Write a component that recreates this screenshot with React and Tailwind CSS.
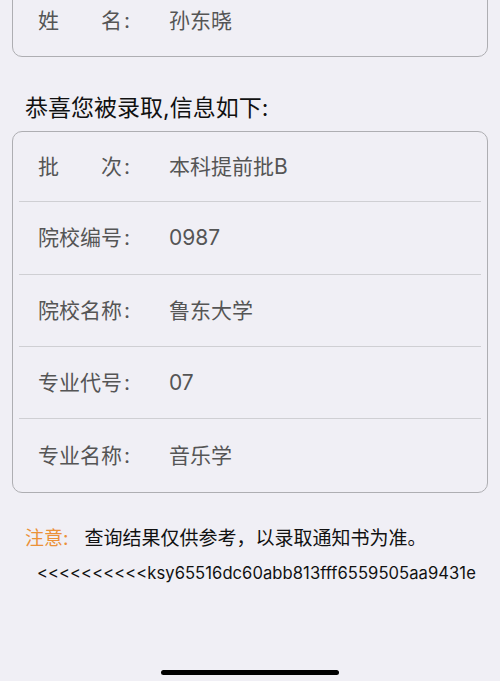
import React from "react";

const rows = [
  { label: ["批", "次"], value: "本科提前批B", h: "h-[70px]" },
  { label: ["院校编号"], value: "0987", h: "h-[73px]" },
  { label: ["院校名称"], value: "鲁东大学", h: "h-[72px]" },
  { label: ["专业代号"], value: "07", h: "h-[72px]" },
  { label: ["专业名称"], value: "音乐学", h: "h-[73px]" },
];

const font = {
  fontFamily: '"Inter", "Noto Sans CJK SC", sans-serif',
};

function Label({ parts }) {
  return (
    <div className="flex w-[131px] text-[21px] text-[#555]">
      <span className="flex w-[84px] justify-between">
        {parts.map((t) => (
          <span key={t}>{t}</span>
        ))}
      </span>
      <span className="ml-[2px]">:</span>
    </div>
  );
}

function Row({ label, value, h, last }) {
  return (
    <div className={`mx-[6px] flex items-center ${h} ${last ? "" : "border-b border-[#cfcfd3]"}`}>
      <div className="ml-[19px]">
        <Label parts={label} />
      </div>
      <div className="text-[21px] text-[#555]">{value}</div>
    </div>
  );
}

export default function App() {
  return (
    <div className="relative h-[681px] w-[500px] overflow-hidden bg-[#f0eff5]" style={font}>
      {/* top card, cut off by scroll */}
      <div className="mx-[12px] -mt-[20px] flex h-[77px] items-end rounded-[10px] border border-[#aeaeb2] pb-[20px]">
        <div className="ml-[25px]">
          <Label parts={["姓", "名"]} />
        </div>
        <div className="text-[21px] text-[#555]">孙东晓</div>
      </div>

      <h2 className="ml-[25px] mt-[36px] text-[23px] leading-[30px] text-[#111]">恭喜您被录取,信息如下:</h2>

      <div className="mx-[12px] mt-[8px] rounded-[10px] border border-[#aeaeb2]">
        {rows.map((r, i) => (
          <Row key={i} label={r.label} value={r.value} h={r.h} last={i === rows.length - 1} />
        ))}
      </div>

      <p className="ml-[25px] mt-[33px] text-[19px] leading-[26px] text-[#111]">
        <span className="text-[#eb9138]">注意:</span>
        <span className="ml-[16px]">查询结果仅供参考，以录取通知书为准。</span>
      </p>

      <p className="ml-[37px] mt-[10px] text-[16.6px] leading-[22px] tracking-[0.05px] text-[#111]">
        {"<<<<<<<<<<ksy65516dc60abb813fff6559505aa9431e"}
      </p>

      <div className="absolute bottom-[6px] left-[161px] h-[5px] w-[178px] rounded-full bg-black" />
    </div>
  );
}
